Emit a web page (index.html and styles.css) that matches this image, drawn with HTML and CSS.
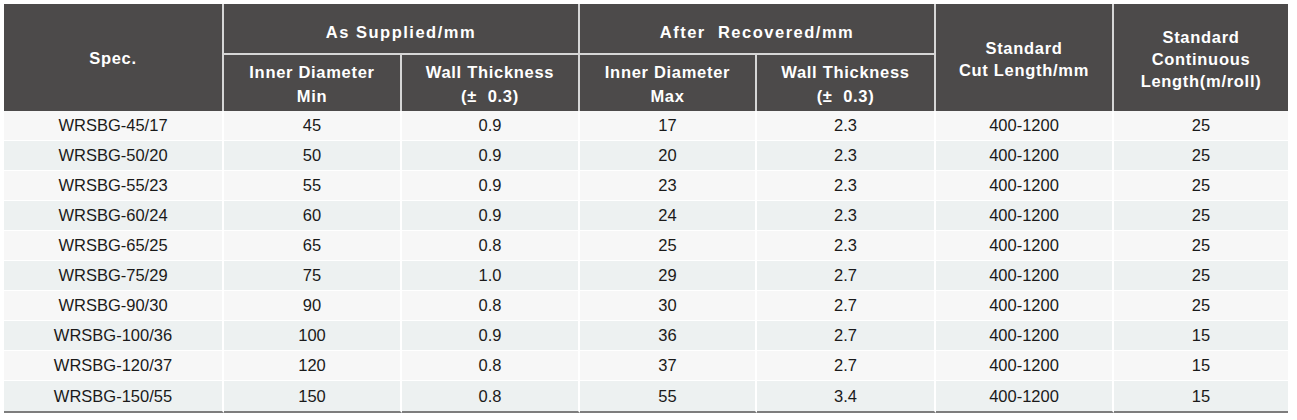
FILE: index.html
```html
<!DOCTYPE html>
<html>
<head>
<meta charset="utf-8">
<link rel="stylesheet" href="styles.css">
</head>
<body>
<table class="spec-table">
  <colgroup>
    <col class="c1"><col class="c2"><col class="c3"><col class="c4"><col class="c5"><col class="c6"><col class="c7">
  </colgroup>
  <thead>
    <tr class="h1">
      <th rowspan="2">Spec.</th>
      <th colspan="2" class="group">As Supplied/mm</th>
      <th colspan="2" class="group">After&nbsp; Recovered/mm</th>
      <th rowspan="2" class="tall">Standard<br>Cut Length/mm</th>
      <th rowspan="2" class="tall last">Standard<br>Continuous<br>Length(m/roll)</th>
    </tr>
    <tr class="h2">
      <th>Inner Diameter<br>Min</th>
      <th>Wall Thickness<br>(±&nbsp; 0.3)</th>
      <th>Inner Diameter<br>Max</th>
      <th>Wall Thickness<br>(±&nbsp; 0.3)</th>
    </tr>
  </thead>
  <tbody>
    <tr><td>WRSBG-45/17</td><td>45</td><td>0.9</td><td>17</td><td>2.3</td><td>400-1200</td><td class="last">25</td></tr>
    <tr><td>WRSBG-50/20</td><td>50</td><td>0.9</td><td>20</td><td>2.3</td><td>400-1200</td><td class="last">25</td></tr>
    <tr><td>WRSBG-55/23</td><td>55</td><td>0.9</td><td>23</td><td>2.3</td><td>400-1200</td><td class="last">25</td></tr>
    <tr><td>WRSBG-60/24</td><td>60</td><td>0.9</td><td>24</td><td>2.3</td><td>400-1200</td><td class="last">25</td></tr>
    <tr><td>WRSBG-65/25</td><td>65</td><td>0.8</td><td>25</td><td>2.3</td><td>400-1200</td><td class="last">25</td></tr>
    <tr><td>WRSBG-75/29</td><td>75</td><td>1.0</td><td>29</td><td>2.7</td><td>400-1200</td><td class="last">25</td></tr>
    <tr><td>WRSBG-90/30</td><td>90</td><td>0.8</td><td>30</td><td>2.7</td><td>400-1200</td><td class="last">25</td></tr>
    <tr><td>WRSBG-100/36</td><td>100</td><td>0.9</td><td>36</td><td>2.7</td><td>400-1200</td><td class="last">15</td></tr>
    <tr><td>WRSBG-120/37</td><td>120</td><td>0.8</td><td>37</td><td>2.7</td><td>400-1200</td><td class="last">15</td></tr>
    <tr><td>WRSBG-150/55</td><td>150</td><td>0.8</td><td>55</td><td>3.4</td><td>400-1200</td><td class="last">15</td></tr>
  </tbody>
</table>
</body>
</html>
```

FILE: styles.css
```css
html, body {
  margin: 0;
  padding: 0;
  background: #ffffff;
}

body {
  padding: 4px 0 0 4px;
  font-family: "Liberation Sans", Arial, sans-serif;
}

.spec-table {
  border-collapse: separate;
  border-spacing: 0;
  width: 1284px;
  table-layout: fixed;
}

.c1 { width: 220px; }
.c2 { width: 178px; }
.c3 { width: 178px; }
.c4 { width: 177px; }
.c5 { width: 179px; }
.c6 { width: 178px; }
.c7 { width: 174px; }

.spec-table th {
  background: #4c4a4a;
  color: #ffffff;
  font-weight: bold;
  font-size: 16.5px;
  letter-spacing: 0.7px;
  line-height: 22px;
  text-align: center;
  vertical-align: middle;
  padding: 0;
  border-right: 2px solid #d6d6d6;
  border-bottom: 2px solid #d6d6d6;
}

.spec-table th.last {
  border-right: none;
}

.spec-table thead tr:last-child th,
.spec-table th[rowspan] {
  border-bottom: none;
}

.h1 th { height: 49px; }
.h1 th.group {
  letter-spacing: 1.5px;
  padding-top: 7px;
  height: 42px;
}
.h1 th.tall {
  padding-top: 2px;
}
.h2 th {
  height: 54px;
  line-height: 24px;
  padding-top: 2px;
}

.h2 th:last-child {
  border-right: 2px solid #d6d6d6;
}

.spec-table td {
  height: 29px;
  padding: 0;
  font-size: 16.5px;
  color: #1a1a1a;
  text-align: center;
  vertical-align: middle;
  border-right: 2px solid #ffffff;
  border-bottom: 1px solid #ffffff;
  background: #f7f7f7;
}

.spec-table td.last {
  border-right: none;
}

.spec-table tbody tr:nth-child(even) td {
  background: #edf1f1;
}

.spec-table tbody tr:last-child td {
  border-bottom: 2px solid #7d7d7d;
  height: 30px;
}
```
